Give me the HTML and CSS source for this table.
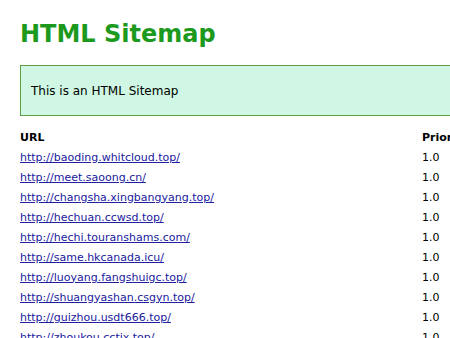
FILE: index.html
```html
<!DOCTYPE html>
<html>
<head>
<meta charset="utf-8">
<title>HTML Sitemap</title>
<link rel="stylesheet" href="styles.css">
</head>
<body>
<div class="page">
  <h1 class="title">HTML Sitemap</h1>
  <div class="intro">This is an HTML Sitemap</div>
  <table class="sitemap">
    <thead>
      <tr><th class="col-url">URL</th><th class="col-pri">Priority</th><th>Change frequency</th></tr>
    </thead>
    <tbody>
      <tr><td><a href="#">http://baoding.whitcloud.top/</a></td><td>1.0</td><td>daily</td></tr>
      <tr><td><a href="#">http://meet.saoong.cn/</a></td><td>1.0</td><td>daily</td></tr>
      <tr><td><a href="#">http://changsha.xingbangyang.top/</a></td><td>1.0</td><td>daily</td></tr>
      <tr><td><a href="#">http://hechuan.ccwsd.top/</a></td><td>1.0</td><td>daily</td></tr>
      <tr><td><a href="#">http://hechi.touranshams.com/</a></td><td>1.0</td><td>daily</td></tr>
      <tr><td><a href="#">http://same.hkcanada.icu/</a></td><td>1.0</td><td>daily</td></tr>
      <tr><td><a href="#">http://luoyang.fangshuigc.top/</a></td><td>1.0</td><td>daily</td></tr>
      <tr><td><a href="#">http://shuangyashan.csgyn.top/</a></td><td>1.0</td><td>daily</td></tr>
      <tr><td><a href="#">http://guizhou.usdt666.top/</a></td><td>1.0</td><td>daily</td></tr>
      <tr><td><a href="#">http://zhoukou.cctix.top/</a></td><td>1.0</td><td>daily</td></tr>
    </tbody>
  </table>
</div>
</body>
</html>
```
FILE: styles.css
```css
html, body {
  margin: 0;
  padding: 0;
  overflow: hidden;
  background: #fff;
}
body {
  font-family: "DejaVu Sans", sans-serif;
  color: #000;
}
.page {
  width: 760px;
  padding: 20px;
}
.title {
  margin: 0 0 17px 0;
  font-size: 24px;
  line-height: 28px;
  font-weight: bold;
  color: #1d9a1d;
}
.intro {
  background: #cff7e3;
  border: 1px solid #5c9e4c;
  padding: 1px 10px 0 10px;
  height: 48px;
  line-height: 49px;
  font-size: 12px;
  margin-bottom: 11px;
}
.sitemap {
  border-collapse: collapse;
  font-size: 11px;
}
.sitemap th {
  text-align: left;
  font-weight: bold;
  padding: 0;
  height: 20px;
}
.sitemap td {
  padding: 0;
  height: 20px;
}
.col-url {
  width: 402px;
}
.col-pri {
  width: 80px;
}
.sitemap a {
  color: #2020a0;
}
```
